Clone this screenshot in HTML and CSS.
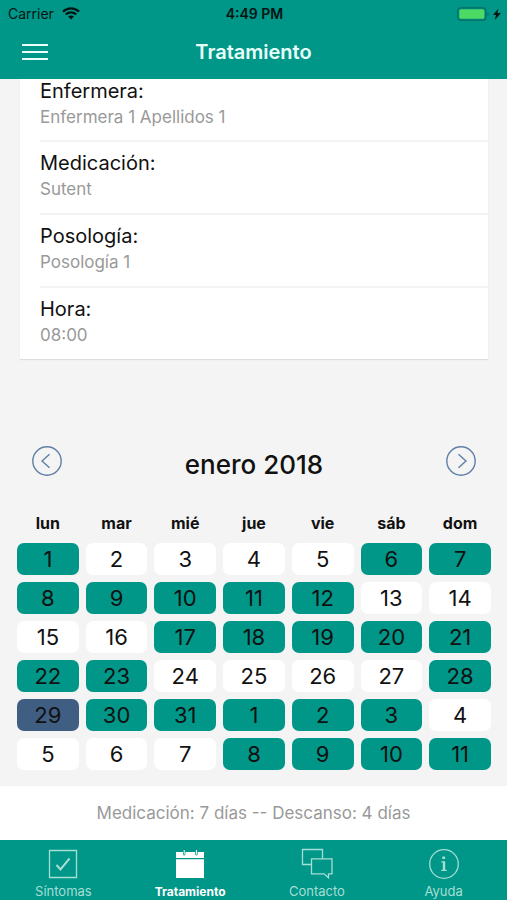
FILE: index.html
```
<!DOCTYPE html>
<html lang="es">
<head>
<meta charset="utf-8">
<meta name="viewport" content="width=device-width, initial-scale=1">
<title>Tratamiento</title>
<link rel="stylesheet" href="styles.css">
</head>
<body>
<header class="top">
  <div class="status">
    <div class="status-left">
      <span>Carrier</span>
      <svg class="wifi" viewBox="0 0 18 13" aria-hidden="true"><path d="M1 4.6C5.6.3 12.4.3 17 4.6M3.8 7.5c3-2.8 7.400-2.800 10.400 0" fill="none" stroke="#031512" stroke-width="2.300"/><path d="M9 12.500 6.100 9.600c1.600-1.500 4.200-1.500 5.800 0z" fill="#031512"/></svg>
    </div>
    <time class="clock">4:49 PM</time>
    <div class="status-right">
      <svg class="battery" viewBox="0 0 44 14" aria-hidden="true"><rect x=".8" y=".8" width="28" height="12.400" rx="3" fill="none" stroke="#046b60" stroke-width="1.200"/><rect x="2.300" y="2.300" width="25" height="9.400" rx="1.500" fill="#4cd964"/><path d="M30.500 5v4.500c1.500-.6 1.500-3.900 0-4.500z" fill="#046b60"/><path d="M41.500 1.500 36 8h3l-1.200 5L44 6h-3.700z" fill="#031512"/></svg>
    </div>
  </div>
  <nav class="bar">
    <button class="menu" type="button" aria-label="Menú">
      <svg viewBox="0 0 26 18" aria-hidden="true"><path d="M0 2h26M0 9h26M0 16h26" stroke="#e9fffb" stroke-width="2"/></svg>
    </button>
    <h1>Tratamiento</h1>
  </nav>
</header>

<main>
  <dl class="card">
    <div class="item first"><dt>Enfermera:</dt><dd>Enfermera 1 Apellidos 1</dd></div>
    <div class="item"><dt>Medicación:</dt><dd>Sutent</dd></div>
    <div class="item"><dt>Posología:</dt><dd>Posología 1</dd></div>
    <div class="item"><dt>Hora:</dt><dd>08:00</dd></div>
  </dl>

  <section class="calendar" aria-labelledby="month">
    <div class="month-bar">
      <button class="arrow" type="button" aria-label="Mes anterior">
        <svg viewBox="0 0 30 30" aria-hidden="true"><circle cx="15" cy="15" r="14.200"/><path d="M17.500 8.200 10 15l7.500 6.800"/></svg>
      </button>
      <h2 id="month">enero 2018</h2>
      <button class="arrow" type="button" aria-label="Mes siguiente">
        <svg viewBox="0 0 30 30" aria-hidden="true"><circle cx="15" cy="15" r="14.200"/><path d="M12.500 8.200 20 15l-7.500 6.800"/></svg>
      </button>
    </div>
    <table class="days">
      <thead>
        <tr><th scope="col">lun</th><th scope="col">mar</th><th scope="col">mié</th><th scope="col">jue</th><th scope="col">vie</th><th scope="col">sáb</th><th scope="col">dom</th></tr>
      </thead>
      <tbody>
        <tr><td class="on">1</td><td>2</td><td>3</td><td>4</td><td>5</td><td class="on">6</td><td class="on">7</td></tr>
        <tr><td class="on">8</td><td class="on">9</td><td class="on">10</td><td class="on">11</td><td class="on">12</td><td>13</td><td>14</td></tr>
        <tr><td>15</td><td>16</td><td class="on">17</td><td class="on">18</td><td class="on">19</td><td class="on">20</td><td class="on">21</td></tr>
        <tr><td class="on">22</td><td class="on">23</td><td>24</td><td>25</td><td>26</td><td>27</td><td class="on">28</td></tr>
        <tr><td class="today">29</td><td class="on">30</td><td class="on">31</td><td class="on">1</td><td class="on">2</td><td class="on">3</td><td>4</td></tr>
        <tr><td>5</td><td>6</td><td>7</td><td class="on">8</td><td class="on">9</td><td class="on">10</td><td class="on">11</td></tr>
      </tbody>
    </table>
  </section>
  <p class="note">Medicación: 7 días -- Descanso: 4 días</p>
</main>

<nav class="tabs" aria-label="Secciones">
  <a href="#sintomas">
    <svg viewBox="0 0 32 32" aria-hidden="true"><path d="M2.500 2.500h27v27h-27z"/><path class="tick" d="M9.500 17l4 4.500 9-11"/></svg>
    <span>Síntomas</span>
  </a>
  <a href="#tratamiento" class="active" aria-current="page">
    <svg viewBox="0 0 32 32" aria-hidden="true"><path class="solid" d="M2 4h7v2.500q1.200 2 2.400 0V4h9.800v2.500q1.200 2 2.400 0V4H30v6H2zM2 11.300h28V30H2zM9.700 2h1v4.500h-1zM21.900 2h1v4.500h-1z"/></svg>
    <span>Tratamiento</span>
  </a>
  <a href="#contacto">
    <svg viewBox="0 0 32 32" aria-hidden="true"><path d="M10.500 16.500h-9v-15h20v9M10.500 10.800h20.500v15h-3.500v4l-4.500-4H10.500z"/></svg>
    <span>Contacto</span>
  </a>
  <a href="#ayuda">
    <svg viewBox="0 0 32 32" aria-hidden="true"><circle cx="16" cy="16" r="14.300"/><path class="solid" d="M14.300 8.500h2.800v2.600h-2.800zM13.300 13.300h3.900v8.400h1.500v1.200h-5.400v-1.200h1.500v-7.200h-1.500z"/></svg>
    <span>Ayuda</span>
  </a>
</nav>
</body>
</html>
```
FILE: styles.css
```
* {
  box-sizing: border-box;
}

body {
  margin: 0;
  min-height: 100vh;
  display: flex;
  flex-direction: column;
  background: #f4f4f4;
  color: #111;
  font-family: Inter, Roboto, "Liberation Sans", sans-serif;
}

h1, h2, p, dl, dd {
  margin: 0;
}

button {
  padding: 0;
  border: 0;
  background: none;
}

svg {
  display: block;
}

.top {
  background: #009688;
}

.status {
  display: grid;
  grid-template-columns: 1fr auto 1fr;
  align-items: center;
  height: 27px;
  padding: 0 6px 0 8px;
  color: #031512;
  font-size: 14px;
}

.status-left {
  display: flex;
  align-items: center;
  gap: 8px;
}

.wifi {
  width: 18px;
  height: 13px;
}

.clock {
  font-weight: 600;
}

.status-right {
  display: flex;
  justify-content: flex-end;
}

.battery {
  width: 44px;
  height: 14px;
}

.bar {
  display: grid;
  grid-template-columns: 1fr auto 1fr;
  align-items: center;
  height: 52px;
  padding: 0 22px 2px;
}

.menu svg {
  width: 26px;
  height: 18px;
}

.bar h1 {
  color: #e9fffb;
  font-size: 20px;
  font-weight: 600;
}

main {
  flex: 1;
  display: flex;
  flex-direction: column;
}

.card {
  margin: 0 19px 0 20px;
  padding-left: 20px;
  background: #fff;
  box-shadow: 0 1px 1px #ddd;
}

.item {
  height: 73px;
  padding-top: 9px;
}

.item + .item {
  border-top: 2px solid #f3f3f3;
}

.item.first {
  height: 61px;
  padding-top: 0;
}

.item dt {
  font-size: 20px;
  line-height: 24px;
}

.item dd {
  color: #999;
  font-size: 17px;
  line-height: 28px;
}

.calendar {
  padding: 80px 9px 9px 10px;
}

.month-bar {
  display: flex;
  justify-content: space-between;
  align-items: center;
  height: 50px;
  padding: 0 22px;
}

.month-bar h2 {
  font-size: 26px;
  font-weight: 500;
}

.arrow {
  margin-bottom: 6px;
}

.arrow svg {
  width: 30px;
  height: 30px;
  fill: none;
  stroke: #5f7fa6;
  stroke-width: 1.4;
}

.days {
  width: 100%;
  table-layout: fixed;
  border-collapse: separate;
  border-spacing: 7px;
}

.days th {
  height: 40px;
  padding: 13px 0 0;
  font-size: 16px;
  font-weight: 700;
}

.days td {
  height: 32px;
  padding: 0;
  border-radius: 7px;
  background: #fff;
  font-size: 22px;
  line-height: 32px;
  text-align: center;
}

.days .on {
  background: #009688;
}

.days .today {
  background: #405d82;
}

.note {
  flex: 1;
  padding: 15px;
  background: #fff;
  color: #999;
  font-size: 17px;
  line-height: 24px;
  text-align: center;
}

.tabs {
  display: grid;
  grid-template-columns: repeat(4, 1fr);
  height: 60px;
  background: #009688;
}

.tabs a {
  display: flex;
  flex-direction: column;
  align-items: center;
  gap: 4px;
  padding-top: 8px;
  color: #a5ded5;
  font-size: 13px;
  line-height: 15px;
  text-decoration: none;
}

.tabs svg {
  width: 32px;
  height: 32px;
  fill: none;
  stroke: currentColor;
  stroke-width: 1.3;
}

.tabs .tick {
  stroke-width: 2;
}

.tabs .solid {
  fill: currentColor;
  stroke: none;
}

.tabs .active {
  color: #fff;
  font-size: 12px;
  font-weight: 700;
}
```
